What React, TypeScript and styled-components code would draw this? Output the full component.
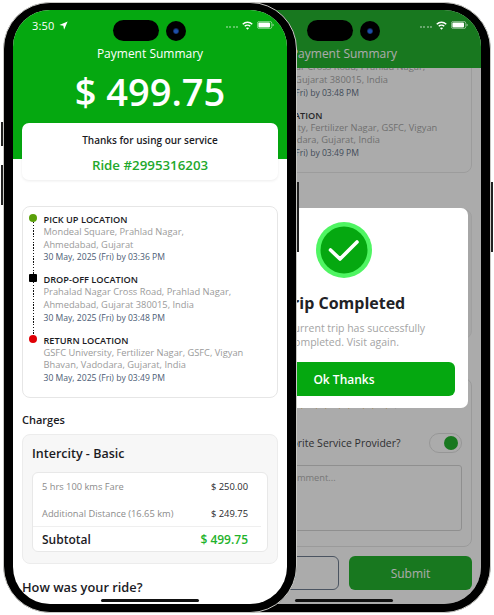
import React from "react";
import styled, { createGlobalStyle } from "styled-components";

const GREEN = "#05a810";

const Global = createGlobalStyle`
  html, body { margin: 0; padding: 0; background: #fff; }
  body { font-family: "Open Sans", "Noto Sans", sans-serif; width: 494px; height: 615px; overflow: hidden; }
  * { box-sizing: border-box; }
`;

const Canvas = styled.div`
  position: relative;
  width: 494px;
  height: 615px;
  overflow: hidden;
`;

const Frame = styled.div<{ $left: number; $z: number }>`
  position: absolute;
  left: ${(p) => p.$left}px;
  top: 2px;
  z-index: ${(p) => p.$z};
  width: 294px;
  height: 611px;
  padding: 7px 9px 8px;
  background: #000;
  border: 1px solid #c8c8c4;
  border-radius: 47px;
`;

const SideButton = styled.div<{ $side: "left" | "right"; $top: number; $h: number }>`
  position: absolute;
  ${(p) => p.$side}: -3px;
  top: ${(p) => p.$top}px;
  width: 2px;
  height: ${(p) => p.$h}px;
  background: #222;
`;

const Screen = styled.div`
  position: relative;
  width: 274px;
  height: 594px;
  border-radius: 37px;
  overflow: hidden;
  background: #fff;
`;

const Pill = styled.div`
  position: absolute;
  z-index: 5;
  left: 100px;
  top: 10px;
  width: 46px;
  height: 21px;
  border-radius: 11px;
  background: #000;
`;

const Camera = styled.div`
  position: absolute;
  z-index: 5;
  left: 153px;
  top: 11px;
  width: 20px;
  height: 20px;
  border-radius: 50%;
  background: #000;
  display: flex;
  align-items: center;
  justify-content: center;
`;

const Lens = styled.div`
  width: 6px;
  height: 6px;
  border-radius: 50%;
  background: radial-gradient(circle at 50% 55%, #1e4fa8 0 35%, #0b1e44 70%);
`;

const HomeBar = styled.div`
  position: absolute;
  z-index: 5;
  left: 88px;
  bottom: 2px;
  width: 98px;
  height: 3px;
  border-radius: 2px;
  background: #111;
`;

const Status = styled.div`
  position: absolute;
  z-index: 4;
  left: 0;
  right: 0;
  top: 8px;
  height: 14px;
  padding: 0 13px 0 19px;
  display: flex;
  align-items: center;
  color: #fff;
`;

const Time = styled.span`
  font-size: 11px;
  font-weight: 500;
  letter-spacing: 0.2px;
  margin-right: 4px;
`;

const StatusRight = styled.div`
  margin-left: auto;
  display: flex;
  align-items: center;
  gap: 4px;
`;

const Signal = styled.div`
  display: flex;
  align-items: flex-end;
  gap: 1.4px;
  height: 5px;
`;

const SignalBar = styled.span<{ $h: number; $o: number }>`
  width: 2px;
  height: ${(p) => p.$h}px;
  background: rgba(255, 255, 255, ${(p) => p.$o});
`;

const StatusBar = () => (
  <Status>
    <Time>3:50</Time>
    <svg width="9" height="9" viewBox="0 0 24 24" fill="#fff">
      <path d="M23 1 L1 10.5 L11.5 12.5 L13.5 23 Z" />
    </svg>
    <StatusRight>
      <Signal>
        <SignalBar $h={2} $o={0.35} />
        <SignalBar $h={2} $o={0.35} />
        <SignalBar $h={2} $o={0.35} />
        <SignalBar $h={2} $o={0.35} />
      </Signal>
      <svg width="11" height="9" viewBox="0 0 22 18" fill="none" stroke="#fff" strokeWidth="3">
        <path d="M1.5 6.5 C7 1 15 1 20.5 6.5" />
        <path d="M5.5 10.5 C8.5 7.5 13.5 7.5 16.5 10.5" />
        <path d="M11 17.5 L7.8 13.8 C9.5 12.4 12.5 12.4 14.2 13.8 Z" fill="#fff" stroke="none" />
      </svg>
      <svg width="17" height="8" viewBox="0 0 17 8">
        <rect x="0.4" y="0.4" width="14.4" height="7.2" rx="2" fill="none" stroke="#fff" strokeOpacity="0.6" strokeWidth="0.8" />
        <rect x="1.4" y="1.4" width="11.6" height="5.2" rx="1" fill="#fff" />
        <path d="M15.6 2.8 C16.4 3 16.8 3.5 16.8 4 C16.8 4.5 16.4 5 15.6 5.2 Z" fill="#fff" fillOpacity="0.6" />
      </svg>
    </StatusRight>
  </Status>
);

const Hero = styled.header`
  height: 149px;
  background: ${GREEN};
  color: #fff;
  padding-top: 34px;
  text-align: center;
`;

const HeroTitle = styled.div`
  font-size: 12px;
  line-height: 20px;
  font-weight: 400;
`;

const Amount = styled.div`
  font-size: 38px;
  line-height: 50px;
  font-weight: 600;
  margin-top: 2px;
`;

const ThanksCard = styled.section`
  margin: -36px 9px 0;
  height: 57px;
  position: relative;
  background: #fff;
  border-radius: 7px;
  box-shadow: 0 1px 3px rgba(0, 0, 0, 0.08);
  text-align: center;
  padding-top: 9px;
`;

const ThanksText = styled.div`
  font-size: 10px;
  line-height: 16px;
  font-weight: 600;
  color: #1b1b1f;
`;

const RideId = styled.div`
  font-size: 13.3px;
  line-height: 18px;
  font-weight: 600;
  color: #1fa82c;
  margin-top: 8px;
`;

const Body = styled.div<{ $top: number }>`
  padding: 0 9px;
  margin-top: ${(p) => p.$top}px;
`;

const LocationCard = styled.section`
  height: 192px;
  border: 1px solid #e6e6e6;
  border-radius: 8px;
  padding: 7px 6px 0;
  background: #fff;
`;

const Stop = styled.div`
  display: grid;
  grid-template-columns: 8px 1fr;
  column-gap: 6.5px;
  height: 60.35px;
`;

const Marker = styled.div`
  display: flex;
  flex-direction: column;
  align-items: center;
`;

const Dot = styled.span<{ $color: string; $square?: boolean }>`
  flex: none;
  width: 8px;
  height: 8px;
  background: ${(p) => p.$color};
  border-radius: ${(p) => (p.$square ? "1px" : "50%")};
`;

const Dotted = styled.span`
  flex: 1;
  width: 1px;
  background: repeating-linear-gradient(to bottom, #111 0 1.4px, transparent 1.4px 2.8px);
`;

const StopText = styled.div`
  margin-top: -1px;
`;

const StopTitle = styled.div`
  font-size: 9.2px;
  line-height: 13px;
  font-weight: 600;
  color: #1b1b1f;
`;

const StopAddr = styled.div`
  font-size: 9.3px;
  line-height: 12.6px;
  color: #9a9a9a;
  white-space: nowrap;
`;

const StopDate = styled.div`
  font-size: 8.6px;
  line-height: 12.6px;
  color: #4a5b73;
`;

const SectionLabel = styled.h3<{ $size: number; $lh: number; $mt: number; $mb: number }>`
  margin: ${(p) => p.$mt}px 0 ${(p) => p.$mb}px;
  font-size: ${(p) => p.$size}px;
  line-height: ${(p) => p.$lh}px;
  font-weight: 600;
  color: #1b1b1f;
`;

const ChargesCard = styled.section`
  height: 130px;
  border: 1px solid #ececec;
  border-radius: 8px;
  background: #f7f7f7;
  padding: 10px 9px 11px;
`;

const PlanName = styled.div`
  font-size: 12.5px;
  line-height: 18px;
  font-weight: 600;
  color: #1b1b1f;
  margin-bottom: 9px;
`;

const ChargeTable = styled.div`
  height: 80px;
  background: #fff;
  border: 1px solid #e8e8e8;
  border-radius: 6px;
`;

const ChargeRow = styled.div<{ $h: number }>`
  height: ${(p) => p.$h}px;
  padding: 0 19px 0 9px;
  display: flex;
  align-items: center;
  justify-content: space-between;
`;

const ChargeName = styled.span`
  font-size: 9.3px;
  color: #8b8b8b;
`;

const ChargeValue = styled.span`
  font-size: 9.4px;
  color: #2a2a2e;
`;

const Divider = styled.div`
  height: 1px;
  margin-right: 6px;
  background: #efefef;
`;

const SubtotalName = styled.span`
  font-size: 12px;
  font-weight: 600;
  color: #1b1b1f;
`;

const SubtotalValue = styled.span`
  font-size: 12px;
  font-weight: 600;
  color: #1fb32c;
`;

const RatingCard = styled.section`
  height: 169px;
  border: 1px solid #e2e2e2;
  border-radius: 8px;
  padding: 13px 9px 0;
`;

const Stars = styled.div`
  display: flex;
  justify-content: center;
  gap: 5.5px;
`;

const ProviderRow = styled.div`
  margin-top: 23px;
  height: 20px;
  display: flex;
  align-items: center;
  justify-content: space-between;
`;

const ProviderLabel = styled.span`
  font-size: 10.5px;
  color: #2a2a2e;
  padding-left: 14px;
`;

const Toggle = styled.div`
  width: 33px;
  height: 20px;
  border: 1px solid #dcdcdc;
  border-radius: 10px;
  background: #fff;
  display: flex;
  align-items: center;
  justify-content: flex-end;
  padding-right: 3px;
`;

const Knob = styled.span`
  width: 14px;
  height: 14px;
  border-radius: 50%;
  background: ${GREEN};
`;

const CommentBox = styled.div`
  margin-top: 12px;
  height: 66px;
  border: 1px solid #d0d0d0;
  border-radius: 3px;
  padding: 5px 8px 5px 12px;
  font-size: 9.3px;
  line-height: 13px;
  color: #a8a8a8;
`;

const Actions = styled.div`
  margin-top: 9px;
  display: grid;
  grid-template-columns: 123px 123px;
  column-gap: 10px;
`;

const GhostButton = styled.div`
  height: 34px;
  border: 1px solid #5b6b80;
  border-radius: 6px;
  background: #fff;
  display: flex;
  align-items: center;
  justify-content: center;
  font-size: 12px;
  color: #43546c;
`;

const SolidButton = styled.div`
  height: 34px;
  border-radius: 6px;
  background: ${GREEN};
  color: #fff;
  display: flex;
  align-items: center;
  justify-content: center;
  font-size: 12px;
`;

const BackHeader = styled.header`
  position: relative;
  z-index: 1;
  height: 58px;
  padding-top: 34px;
  background: ${GREEN};
  color: #fff;
  text-align: center;
`;

const Scroller = styled.div`
  height: 536px;
  overflow: hidden;
`;

const Dim = styled.div`
  position: absolute;
  z-index: 2;
  inset: 0;
  background: rgba(52, 52, 52, 0.414);
  display: flex;
  padding: 198px 0 0 13px;
`;

const Modal = styled.section`
  width: 248px;
  height: 200px;
  background: #fff;
  border-radius: 7px;
  padding: 14px 13px 0;
  display: flex;
  flex-direction: column;
  align-items: center;
`;

const ModalTitle = styled.h2`
  margin: 14px 0 0;
  font-size: 16px;
  line-height: 22px;
  font-weight: 700;
  color: #222226;
`;

const ModalText = styled.p`
  margin: 7px 0 0;
  font-size: 10.5px;
  line-height: 14px;
  color: #a4a4a4;
  text-align: center;
  white-space: nowrap;
`;

const ModalButton = styled.div`
  margin-top: 13px;
  width: 222px;
  height: 34px;
  border-radius: 6px;
  background: ${GREEN};
  color: #fff;
  font-size: 12px;
  font-weight: 600;
  display: flex;
  align-items: center;
  justify-content: center;
`;

const STAR = "M9 0.8 L11.5 6.1 L17.4 6.9 L13.1 11 L14.2 16.8 L9 14 L3.8 16.8 L4.9 11 L0.6 6.9 L6.5 6.1 Z";

const Star = ({ half }: { half?: boolean }) => (
  <svg width="18" height="18" viewBox="0 0 18 18">
    {half && (
      <defs>
        <linearGradient id="halfStar">
          <stop offset="50%" stopColor="#f0a92b" />
          <stop offset="50%" stopColor="#c9c9c9" />
        </linearGradient>
      </defs>
    )}
    <path d={STAR} fill={half ? "url(#halfStar)" : "#f0a92b"} />
  </svg>
);

const Locations = () => (
  <LocationCard>
    <Stop>
      <Marker>
        <Dot $color="#5aa00a" />
        <Dotted />
      </Marker>
      <StopText>
        <StopTitle>PICK UP LOCATION</StopTitle>
        <StopAddr>Mondeal Square, Prahlad Nagar,</StopAddr>
        <StopAddr>Ahmedabad, Gujarat</StopAddr>
        <StopDate>30 May, 2025 (Fri) by 03:36 PM</StopDate>
      </StopText>
    </Stop>
    <Stop>
      <Marker>
        <Dot $color="#000" $square />
        <Dotted />
      </Marker>
      <StopText>
        <StopTitle>DROP-OFF LOCATION</StopTitle>
        <StopAddr>Prahalad Nagar Cross Road, Prahlad Nagar,</StopAddr>
        <StopAddr>Ahmedabad, Gujarat 380015, India</StopAddr>
        <StopDate>30 May, 2025 (Fri) by 03:48 PM</StopDate>
      </StopText>
    </Stop>
    <Stop>
      <Marker>
        <Dot $color="#e00006" />
      </Marker>
      <StopText>
        <StopTitle>RETURN LOCATION</StopTitle>
        <StopAddr>GSFC University, Fertilizer Nagar, GSFC, Vigyan</StopAddr>
        <StopAddr>Bhavan, Vadodara, Gujarat, India</StopAddr>
        <StopDate>30 May, 2025 (Fri) by 03:49 PM</StopDate>
      </StopText>
    </Stop>
  </LocationCard>
);

const Charges = () => (
  <>
    <SectionLabel $size={11} $lh={16} $mt={14} $mb={6}>Charges</SectionLabel>
    <ChargesCard>
      <PlanName>Intercity - Basic</PlanName>
      <ChargeTable>
        <ChargeRow $h={27}>
          <ChargeName>5 hrs 100 kms Fare</ChargeName>
          <ChargeValue>$ 250.00</ChargeValue>
        </ChargeRow>
        <ChargeRow $h={26}>
          <ChargeName>Additional Distance (16.65 km)</ChargeName>
          <ChargeValue>$ 249.75</ChargeValue>
        </ChargeRow>
        <Divider />
        <ChargeRow $h={24}>
          <SubtotalName>Subtotal</SubtotalName>
          <SubtotalValue>$ 499.75</SubtotalValue>
        </ChargeRow>
      </ChargeTable>
    </ChargesCard>
    <SectionLabel $size={12.8} $lh={20} $mt={13} $mb={6}>How was your ride?</SectionLabel>
  </>
);

const Chrome = () => (
  <>
    <Pill />
    <Camera>
      <Lens />
    </Camera>
    <StatusBar />
    <HomeBar />
  </>
);

export default function App() {
  return (
    <Canvas>
      <Global />
      <Frame $left={197} $z={1}>
        <SideButton $side="right" $top={179} $h={70} />
        <Screen>
          <BackHeader>
            <HeroTitle>Payment Summary</HeroTitle>
          </BackHeader>
          <Scroller>
            <Body $top={-87}>
              <Locations />
              <Charges />
              <RatingCard>
                <Stars>
                  <Star />
                  <Star />
                  <Star />
                  <Star />
                  <Star half />
                </Stars>
                <ProviderRow>
                  <ProviderLabel>Add to Favorite Service Provider?</ProviderLabel>
                  <Toggle>
                    <Knob />
                  </Toggle>
                </ProviderRow>
                <CommentBox>Write your comment...</CommentBox>
              </RatingCard>
              <Actions>
                <GhostButton>Cancel</GhostButton>
                <SolidButton>Submit</SolidButton>
              </Actions>
            </Body>
          </Scroller>
          <Dim>
            <Modal>
              <svg width="56" height="56" viewBox="0 0 56 56">
                <circle cx="28" cy="28" r="28" fill="#4ff562" />
                <circle cx="28" cy="28" r="23.5" fill={GREEN} />
                <path d="M14.5 28 L24 37 L41 20" fill="none" stroke="#fff" strokeWidth="3.6" strokeLinecap="round" strokeLinejoin="round" />
              </svg>
              <ModalTitle>Trip Completed</ModalTitle>
              <ModalText>
                Your current trip has successfully
                <br />
                completed. Visit again.
              </ModalText>
              <ModalButton>Ok Thanks</ModalButton>
            </Modal>
          </Dim>
          <Chrome />
        </Screen>
      </Frame>
      <Frame $left={3} $z={2}>
        <SideButton $side="left" $top={119} $h={24} />
        <SideButton $side="left" $top={162} $h={40} />
        <SideButton $side="right" $top={179} $h={70} />
        <Screen>
          <Hero>
            <HeroTitle>Payment Summary</HeroTitle>
            <Amount>$ 499.75</Amount>
          </Hero>
          <ThanksCard>
            <ThanksText>Thanks for using our service</ThanksText>
            <RideId>Ride #2995316203</RideId>
          </ThanksCard>
          <Body $top={26}>
            <Locations />
            <Charges />
          </Body>
          <Chrome />
        </Screen>
      </Frame>
    </Canvas>
  );
}
